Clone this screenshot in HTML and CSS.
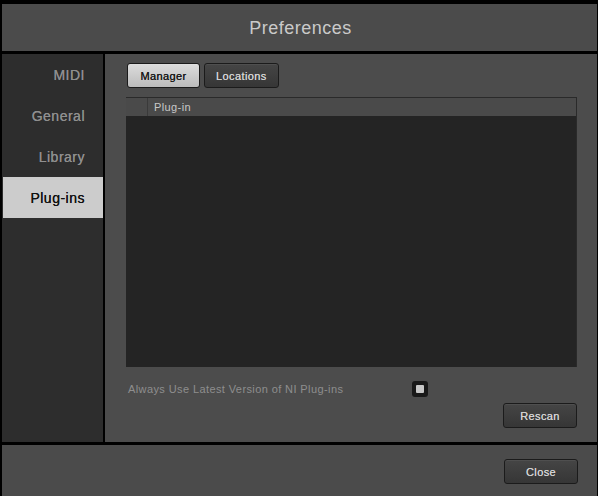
FILE: index.html
```html
<!DOCTYPE html>
<html>
<head>
<meta charset="utf-8">
<link rel="stylesheet" href="styles.css">
</head>
<body>
<div class="window">
  <header class="titlebar">Preferences</header>
  <div class="main">
    <nav class="sidebar">
      <div class="nav-item">MIDI</div>
      <div class="nav-item">General</div>
      <div class="nav-item">Library</div>
      <div class="nav-item active">Plug-ins</div>
    </nav>
    <section class="content">
      <div class="tabs">
        <button class="btn light">Manager</button>
        <button class="btn">Locations</button>
      </div>
      <div class="table">
        <div class="thead">
          <div class="th-check"></div>
          <div class="th-name">Plug-in</div>
        </div>
        <div class="tbody"></div>
      </div>
      <div class="option">
        <span class="option-label">Always Use Latest Version of NI Plug-ins</span>
        <span class="checkbox"><span class="check-inner"></span></span>
      </div>
      <div class="actions">
        <button class="btn wide">Rescan</button>
      </div>
    </section>
  </div>
  <footer class="footer">
    <button class="btn wide">Close</button>
  </footer>
</div>
</body>
</html>
```

FILE: styles.css
```css
html, body {
  margin: 0;
  padding: 0;
  background: #000;
}
body {
  width: 598px;
  height: 496px;
  overflow: hidden;
  font-family: "Liberation Sans", Arial, sans-serif;
}
.window {
  box-sizing: border-box;
  height: 496px;
  padding: 4px 1px 0 2px;
  display: flex;
  flex-direction: column;
  gap: 3px;
}
.titlebar {
  box-sizing: border-box;
  height: 47px;
  background: #4b4b4b;
  color: #cacaca;
  font-size: 18px;
  letter-spacing: 0.5px;
  display: flex;
  align-items: center;
  justify-content: center;
  padding: 2px 0 0 2px;
}
.main {
  height: 388px;
  display: flex;
  gap: 2px;
}
.sidebar {
  width: 101px;
  background: #2d2d2d;
  display: flex;
  flex-direction: column;
}
.nav-item {
  height: 41px;
  display: flex;
  align-items: center;
  justify-content: flex-end;
  padding-right: 18px;
  font-size: 14px;
  letter-spacing: 0.5px;
  color: #8f8f8f;
  text-shadow: 0 0 0.4px currentColor;
}
.nav-item.active {
  background: #cccccc;
  color: #111;
  margin-left: 1px;
}
.content {
  flex: 1;
  background: #4c4c4c;
  padding: 9px 20px 14px 21px;
  display: flex;
  flex-direction: column;
}
.tabs {
  display: flex;
  gap: 4px;
  margin-left: 1px;
}
.btn {
  font-family: "Liberation Sans", Arial, sans-serif;
  font-size: 11px;
  letter-spacing: 0.4px;
  height: 25px;
  padding: 0 11px;
  border: 1px solid #1b1b1b;
  border-radius: 3px;
  background: linear-gradient(#454545, #363636);
  color: #d2d2d2;
  box-shadow: inset 0 1px 0 rgba(255,255,255,0.06);
  text-shadow: 0 0 0.3px currentColor;
}
.btn.light {
  background: linear-gradient(#dcdcdc, #bcbcbc);
  color: #1a1a1a;
  width: 73px;
}
.btn.wide {
  width: 74px;
}
.table {
  margin-top: 9px;
  height: 270px;
  display: flex;
  flex-direction: column;
  border-top: 1px solid #2a2a2a;
  border-right: 1px solid #2a2a2a;
}
.thead {
  height: 18px;
  background: #4a4a4a;
  display: flex;
}
.th-check {
  width: 21px;
  border-right: 1px solid #3a3a3a;
}
.th-name {
  padding-left: 6px;
  font-size: 11px;
  letter-spacing: 0.4px;
  color: #c8c8c8;
  display: flex;
  align-items: center;
}
.tbody {
  flex: 1;
  background: #242424;
}
.option {
  margin-top: 14px;
  display: grid;
  grid-template-columns: 286px 16px;
  align-items: center;
}
.option-label {
  padding-left: 2px;
  font-size: 11px;
  letter-spacing: 0.4px;
  color: #8e8e8e;
}
.checkbox {
  width: 16px;
  height: 16px;
  background: #191919;
  border-radius: 3px;
  display: flex;
  align-items: center;
  justify-content: center;
}
.check-inner {
  width: 8px;
  height: 8px;
  background: #c8c8c8;
  border-radius: 1px;
}
.actions {
  margin-top: 6px;
  display: flex;
  justify-content: flex-end;
}
.footer {
  flex: 1;
  background: #4b4b4b;
  display: flex;
  justify-content: flex-end;
  align-items: flex-start;
  padding: 14px 19px 0 0;
}
```
